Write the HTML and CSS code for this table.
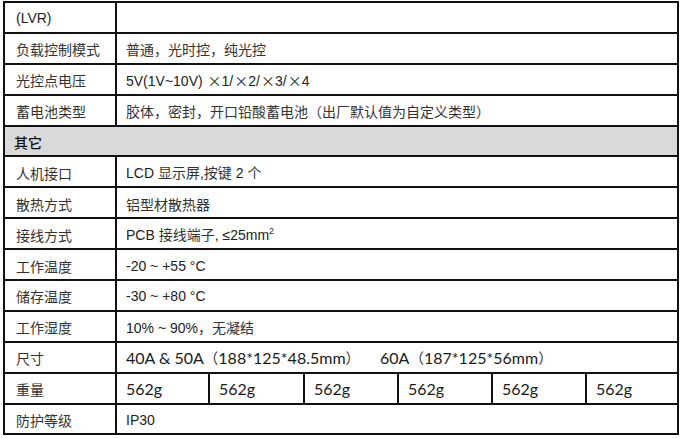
FILE: index.html
```html
<!DOCTYPE html>
<html lang="zh-CN">
<head>
<meta charset="utf-8">
<link rel="stylesheet" href="styles.css">
</head>
<body>
<table class="spec">
  <colgroup>
    <col class="c-label">
    <col class="c1"><col class="c2"><col class="c3"><col class="c4"><col class="c5"><col class="c6">
  </colgroup>
  <tr><td class="label">(LVR)</td><td colspan="6"></td></tr>
  <tr><td class="label cjk">负载控制模式</td><td colspan="6" class="cjk">普通，光时控，纯光控</td></tr>
  <tr><td class="label cjk">光控点电压</td><td colspan="6">5V(1V~10V) <span class="cjk x">×</span>1/<span class="cjk x">×</span>2/<span class="cjk x">×</span>3/<span class="cjk x">×</span>4</td></tr>
  <tr><td class="label cjk">蓄电池类型</td><td colspan="6" class="cjk">胶体，密封，开口铅酸蓄电池（出厂默认值为自定义类型）</td></tr>
  <tr class="section"><td colspan="7" class="cjk">其它</td></tr>
  <tr><td class="label cjk">人机接口</td><td colspan="6">LCD <span class="cjk">显示屏</span>,<span class="cjk">按键</span> 2 <span class="cjk">个</span></td></tr>
  <tr><td class="label cjk">散热方式</td><td colspan="6" class="cjk">铝型材散热器</td></tr>
  <tr><td class="label cjk">接线方式</td><td colspan="6">PCB <span class="cjk">接线端子</span>, ≤25mm<sup>2</sup></td></tr>
  <tr><td class="label cjk">工作温度</td><td colspan="6">-20 ~ +55 °C</td></tr>
  <tr><td class="label cjk">储存温度</td><td colspan="6">-30 ~ +80 °C</td></tr>
  <tr><td class="label cjk">工作湿度</td><td colspan="6">10% ~ 90%<span class="cjk">，无凝结</span></td></tr>
  <tr><td class="label cjk">尺寸</td><td colspan="6" class="cal">40A &amp; 50A<span class="cjk">（</span>188*125*48.5mm<span class="cjk">）</span><span class="gap"></span>60A<span class="cjk">（</span>187*125*56mm<span class="cjk">）</span></td></tr>
  <tr><td class="label cjk">重量</td><td class="cal">562g</td><td class="cal">562g</td><td class="cal">562g</td><td class="cal">562g</td><td class="cal">562g</td><td class="cal">562g</td></tr>
  <tr><td class="label cjk">防护等级</td><td colspan="6">IP30</td></tr>
</table>
</body>
</html>
```

FILE: styles.css
```css
html, body {
  margin: 0;
  padding: 0;
  background: #ffffff;
}
body {
  font-family: "Liberation Sans", Arial, "Noto Sans CJK SC", sans-serif;
  font-size: 14px;
  color: #222;
}
.spec {
  margin: 1px 0 0 3px;
  width: 674px;
  border-collapse: collapse;
  table-layout: fixed;
}
.c-label { width: 112px; }
.c1 { width: 93px; }
.c2 { width: 95px; }
.c3 { width: 94px; }
.c4 { width: 94px; }
.c5 { width: 94px; }
.c6 { width: 92px; }
.spec tr { height: 30.9px; }
.spec td {
  border: 2px solid #111;
  padding: 2px 10px 0 9px;
  vertical-align: middle;
  white-space: nowrap;
  line-height: 18px;
}
.spec td.label { padding-left: 11px; }
.cjk {
  font-family: "Noto Sans CJK SC", sans-serif;
  font-weight: 400;
  color: #333;
}
.x { margin-left: 1px; }
.section td {
  background: #d9d9d9;
  font-weight: 500;
  color: #111;
}
.cal {
  font-family: Lato, "Noto Sans CJK SC", sans-serif;
  font-size: 16px;
  color: #1a1a1a;
}
.cal .cjk { font-size: 14.5px; }
.gap { display: inline-block; width: 20px; }
sup {
  font-size: 9px;
  line-height: 0;
  vertical-align: 6px;
}
```
